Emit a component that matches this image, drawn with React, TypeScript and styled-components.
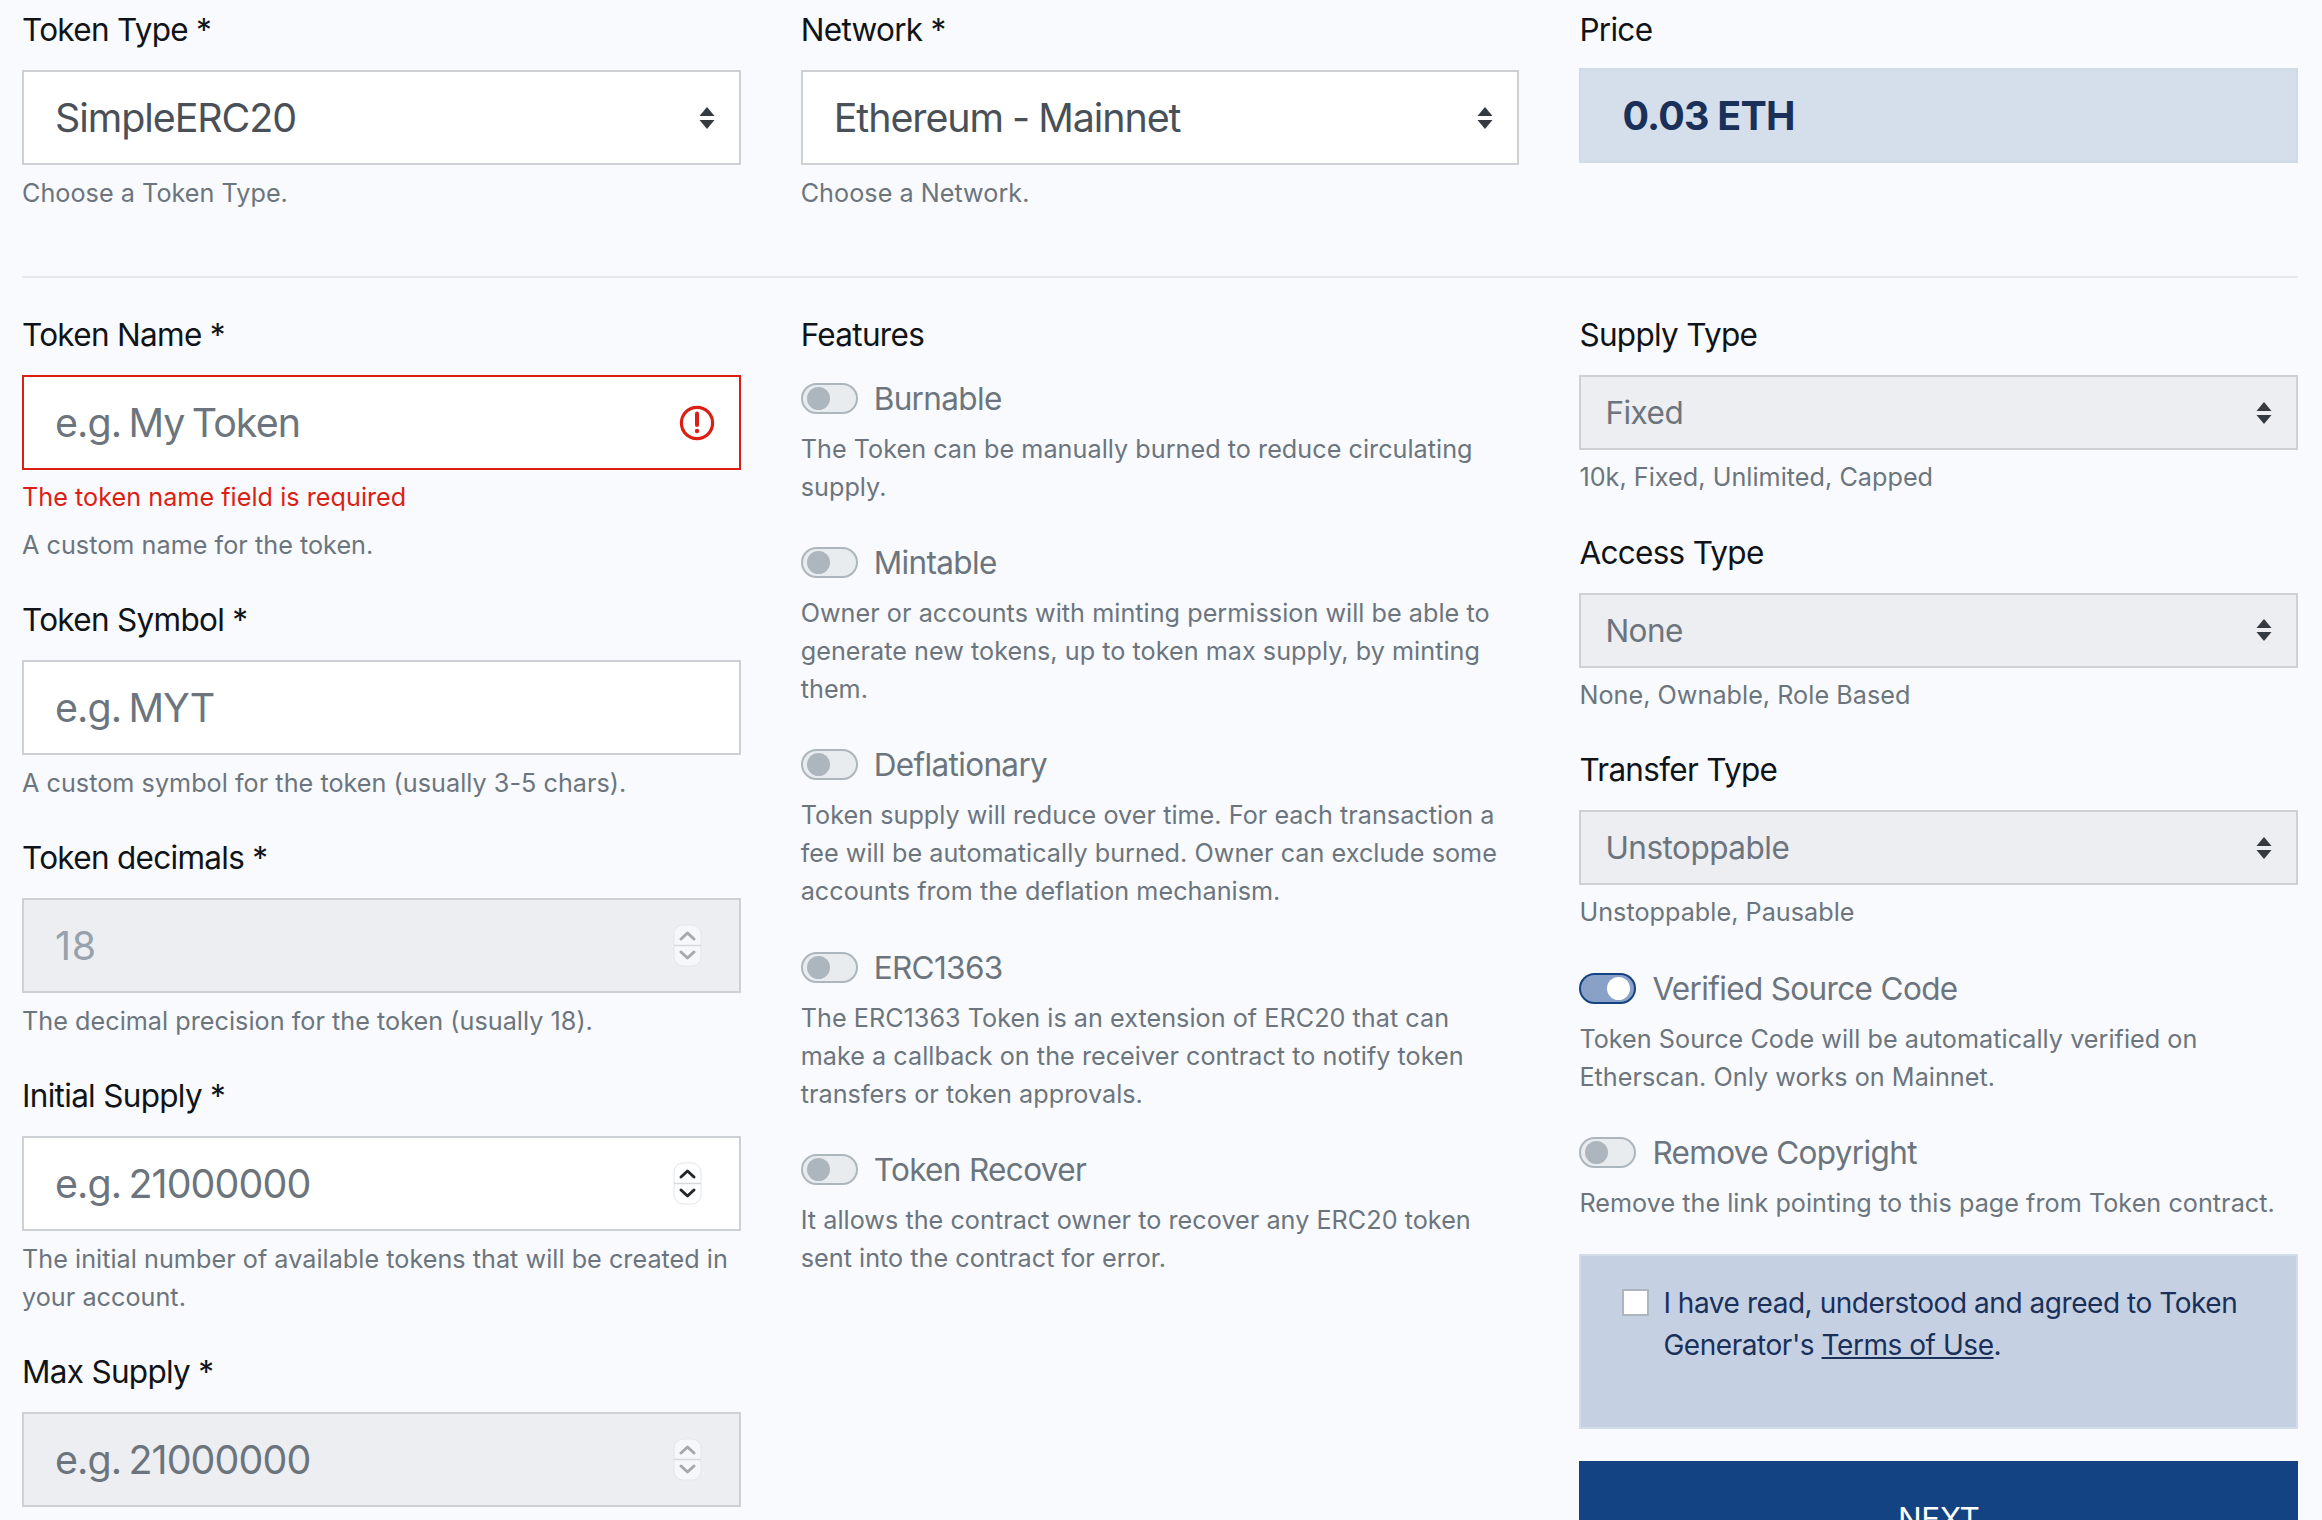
import styled, { createGlobalStyle } from 'styled-components';

const GlobalStyle = createGlobalStyle`
    html, body {
        margin: 0;
        height: 100%;
        overflow: hidden;
        background-color: #F8FAFD;
        font-family: Inter, "Liberation Sans", sans-serif;
    }
    * {
        box-sizing: border-box;
    }
`

const Page = styled.div`
    width: 2276px;
    margin-left: 22px;
    padding-top: 7px;
`

const Columns = styled.div`
    display: grid;
    grid-template-columns: repeat(3, 718.7px);
    column-gap: 60px;
`

const Divider = styled.hr`
    margin: 31px 0 34px;
    border: 0;
    border-top: 2px solid #E3E6EA;
`

const Group = styled.div<{ $compact?: boolean }>`
    margin-bottom: ${p => (p.$compact ? '33.5px' : '33px')};
`

const Label = styled.label`
    display: block;
    height: 47px;
    margin-bottom: 16px;
    color: #101418;
    font-size: 31.5px;
    letter-spacing: -0.7px;
    line-height: 45px;
`

const Box = styled.div<{ $size?: 'lg' | 'sm'; $invalid?: boolean; $disabled?: boolean }>`
    display: flex;
    align-items: center;
    height: ${p => (p.$size === 'sm' ? '75px' : '95px')};
    padding: ${p => (p.$size === 'sm' ? '0 24px' : '0 31px')};
    padding-right: 24px;
    background-color: ${p => (p.$disabled ? '#ECEEF1' : '#FFFFFF')};
    border: 2px solid ${p => (p.$invalid ? '#DC1F14' : '#CDD1D6')};
`

const TextInput = styled.input`
    flex: 1;
    min-width: 0;
    padding: 0;
    border: 0;
    outline: 0;
    background: transparent;
    color: #495057;
    font-family: inherit;
    font-size: 39.4px;
    letter-spacing: -0.9px;
    word-spacing: -3px;

    &::placeholder {
        color: #6C757D;
        opacity: 1;
    }

    &:disabled:not(:placeholder-shown) {
        color: #97A1AB;
        letter-spacing: 0.8px;
    }
`

const Select = styled.select<{ $size?: 'lg' | 'sm'; $disabled?: boolean }>`
    flex: 1;
    min-width: 0;
    padding: 0;
    border: 0;
    outline: 0;
    appearance: none;
    background: transparent;
    color: ${p => (p.$disabled ? '#6C757D' : '#495057')};
    font-family: inherit;
    font-size: ${p => (p.$size === 'sm' ? '31.5px' : '39.4px')};
    letter-spacing: ${p => (p.$size === 'sm' ? '-0.5px' : '-1.05px')};
    word-spacing: ${p => (p.$size === 'sm' ? '0' : '-1px')};
    opacity: 1;
`

const Help = styled.small<{ $tight?: boolean }>`
    display: block;
    margin-top: ${p => (p.$tight ? '8px' : '9px')};
    color: #6C757D;
    font-size: 25.2px;
    letter-spacing: 0.03px;
    line-height: 38px;
`

const ErrorText = styled(Help)`
    color: #DC1F14;
    margin-bottom: 10px;
`

const PriceLabel = styled(Label)`
    margin-bottom: 14px;
`

const PriceBox = styled.div`
    height: 95px;
    padding-left: 41px;
    background-color: #D5DFEB;
    border: 2px solid #D0DBE8;
    color: #1A3059;
    font-size: 39.4px;
    font-weight: 700;
    letter-spacing: -0.75px;
    line-height: 93px;
`

const SwitchItem = styled.div`
    margin-bottom: 33.2px;
`

const SwitchRow = styled.div`
    display: flex;
    align-items: center;
    gap: 16px;
    height: 47px;
    color: #6C757D;
    font-size: 31.5px;
    letter-spacing: -0.65px;
`

const SwitchTrack = styled.span<{ $on?: boolean }>`
    display: flex;
    align-items: center;
    justify-content: ${p => (p.$on ? 'flex-end' : 'flex-start')};
    width: 57px;
    height: 31px;
    padding: 0 4px;
    border: 2px solid ${p => (p.$on ? '#134383' : '#ADB5BD')};
    border-radius: 16px;
    background-color: ${p => (p.$on ? '#89A1C7' : '#E9ECEF')};
`

const SwitchKnob = styled.span<{ $on?: boolean }>`
    width: 23px;
    height: 23px;
    border-radius: 50%;
    background-color: ${p => (p.$on ? '#FFFFFF' : '#ADB5BD')};
`

const TermsAlert = styled.div`
    display: flex;
    align-items: flex-start;
    gap: 14px;
    height: 175px;
    margin-top: -1px;
    padding: 26px 20px 26px 41px;
    background-color: #C5D1E3;
    border: 2px solid #D3DCE9;
    color: #1A3059;
    font-size: 28px;
    letter-spacing: -0.45px;
    line-height: 42px;
`

const Checkbox = styled.input`
    flex: none;
    width: 27px;
    height: 27px;
    margin: 7px 0 0;
    appearance: none;
    background-color: #FFFFFF;
    border: 2px solid #ADB5BD;
`

const TermsLink = styled.a`
    color: inherit;
    text-decoration: underline;
`

const NextButton = styled.button`
    display: block;
    width: 100%;
    height: 116px;
    margin-top: 32px;
    border: 0;
    background-color: #134383;
    color: #FFFFFF;
    font-family: inherit;
    font-size: 31.5px;
    letter-spacing: -0.5px;
`

function SelectArrows() {
    return (
        <svg width="16" height="24" viewBox="0 0 16 24" fill="#343A40">
            <path d="M8 1 15.5 10H.5z"/>
            <path d="M8 23 15.5 14H.5z"/>
        </svg>
    )
}

function InvalidIcon() {
    return (
        <svg width="36" height="36" viewBox="0 0 36 36" fill="none">
            <circle cx="18" cy="18" r="15.6" stroke="#DC1F14" strokeWidth="3.2"/>
            <path d="M18 8.5v11.5" stroke="#DC1F14" strokeWidth="4" strokeLinecap="round"/>
            <circle cx="18" cy="26" r="2.2" fill="#DC1F14"/>
        </svg>
    )
}

function Spinner({ muted }: { muted?: boolean }) {
    const color = muted ? '#A4A9AE' : '#23272B'
    return (
        <svg width="29" height="43" viewBox="0 0 29 43" fill="none" style={{marginRight: 13}}>
            <rect x="1" y="1" width="27" height="41" rx="9" fill={muted ? '#F6F7F9' : '#FFFFFF'} stroke="#E4E6E9"/>
            <path d="M1 21.5h27" stroke="#D6D9DC" strokeWidth="1.5"/>
            <path d="M8 15 14.5 9 21 15" stroke={color} strokeWidth="3" strokeLinecap="round" strokeLinejoin="round"/>
            <path d="M8 28 14.5 34 21 28" stroke={color} strokeWidth="3" strokeLinecap="round" strokeLinejoin="round"/>
        </svg>
    )
}

function SelectField({ label, value, help, small, disabled }: SelectFieldProps) {
    const size = small ? 'sm' : 'lg'
    return (
        <Group $compact={small}>
            <Label>{label}</Label>
            <Box $size={size} $disabled={disabled}>
                <Select $size={size} $disabled={disabled} defaultValue={value}>
                    <option>{value}</option>
                </Select>
                <SelectArrows/>
            </Box>
            <Help $tight={small}>{help}</Help>
        </Group>
    )
}

function NumberField({ label, placeholder, value, help, disabled }: NumberFieldProps) {
    return (
        <Group>
            <Label>{label}</Label>
            <Box $disabled={disabled}>
                <TextInput placeholder={placeholder} defaultValue={value} disabled={disabled}/>
                <Spinner muted={disabled}/>
            </Box>
            {help && <Help>{help}</Help>}
        </Group>
    )
}

function Toggle({ label, help, on }: ToggleProps) {
    return (
        <SwitchItem>
            <SwitchRow>
                <SwitchTrack $on={on}><SwitchKnob $on={on}/></SwitchTrack>
                {label}
            </SwitchRow>
            <Help $tight>{help}</Help>
        </SwitchItem>
    )
}

export default function App() {
    return (
        <Page>
            <GlobalStyle/>
            <Columns>
                <SelectField label="Token Type *" value="SimpleERC20" help="Choose a Token Type."/>
                <SelectField label="Network *" value="Ethereum - Mainnet" help="Choose a Network."/>
                <Group>
                    <PriceLabel>Price</PriceLabel>
                    <PriceBox>0.03 ETH</PriceBox>
                </Group>
            </Columns>
            <Divider/>
            <Columns>
                <div>
                    <Group>
                        <Label>Token Name *</Label>
                        <Box $invalid>
                            <TextInput placeholder="e.g. My Token"/>
                            <InvalidIcon/>
                        </Box>
                        <ErrorText $tight>The token name field is required</ErrorText>
                        <Help>A custom name for the token.</Help>
                    </Group>
                    <Group>
                        <Label>Token Symbol *</Label>
                        <Box>
                            <TextInput placeholder="e.g. MYT"/>
                        </Box>
                        <Help>A custom symbol for the token (usually 3-5 chars).</Help>
                    </Group>
                    <NumberField label="Token decimals *" value="18" disabled help="The decimal precision for the token (usually 18)."/>
                    <NumberField label="Initial Supply *" placeholder="e.g. 21000000" help="The initial number of available tokens that will be created in your account."/>
                    <NumberField label="Max Supply *" placeholder="e.g. 21000000" disabled/>
                </div>
                <div>
                    <Label>Features</Label>
                    <Toggle label="Burnable" help="The Token can be manually burned to reduce circulating supply."/>
                    <Toggle label="Mintable" help="Owner or accounts with minting permission will be able to generate new tokens, up to token max supply, by minting them."/>
                    <Toggle label="Deflationary" help="Token supply will reduce over time. For each transaction a fee will be automatically burned. Owner can exclude some accounts from the deflation mechanism."/>
                    <Toggle label="ERC1363" help="The ERC1363 Token is an extension of ERC20 that can make a callback on the receiver contract to notify token transfers or token approvals."/>
                    <Toggle label="Token Recover" help="It allows the contract owner to recover any ERC20 token sent into the contract for error."/>
                </div>
                <div>
                    <SelectField label="Supply Type" value="Fixed" help="10k, Fixed, Unlimited, Capped" small disabled/>
                    <SelectField label="Access Type" value="None" help="None, Ownable, Role Based" small disabled/>
                    <SelectField label="Transfer Type" value="Unstoppable" help="Unstoppable, Pausable" small disabled/>
                    <Toggle on label="Verified Source Code" help="Token Source Code will be automatically verified on Etherscan. Only works on Mainnet."/>
                    <Toggle label="Remove Copyright" help="Remove the link pointing to this page from Token contract."/>
                    <TermsAlert>
                        <Checkbox type="checkbox"/>
                        <span>I have read, understood and agreed to Token Generator's <TermsLink href="#">Terms of Use</TermsLink>.</span>
                    </TermsAlert>
                    <NextButton>NEXT</NextButton>
                </div>
            </Columns>
        </Page>
    )
}

interface SelectFieldProps {
    label: string
    value: string
    help: string
    small?: boolean
    disabled?: boolean
}

interface NumberFieldProps {
    label: string
    placeholder?: string
    value?: string
    help?: string
    disabled?: boolean
}

interface ToggleProps {
    label: string
    help: string
    on?: boolean
}
